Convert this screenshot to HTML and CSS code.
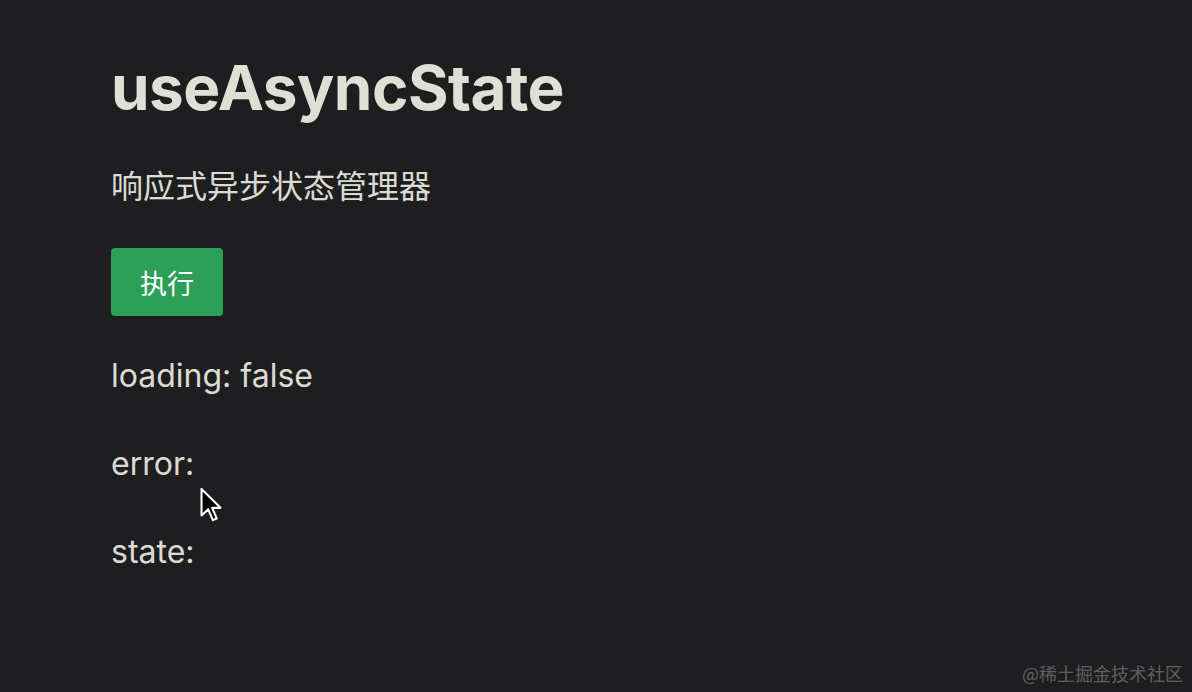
FILE: index.html
```html
<!DOCTYPE html>
<html lang="zh">
<head>
<meta charset="utf-8">
<link rel="stylesheet" href="styles.css">
</head>
<body>
<main class="page">
  <h1 class="title">useAsyncState</h1>
  <p class="subtitle">响应式异步状态管理器</p>
  <button class="run-btn">执行</button>
  <p class="line">loading: false</p>
  <p class="line">error: </p>
  <p class="line">state: </p>
</main>
<svg class="cursor" width="24" height="36" viewBox="0 0 12 19">
  <path d="M1 1 L1 15 L4.5 11.8 L7 17.5 L9 16.6 L6.6 11 L11 11 Z" fill="#000" stroke="#fff" stroke-width="1.1" stroke-linejoin="round"/>
</svg>
<div class="watermark">@稀土掘金技术社区</div>
</body>
</html>
```
FILE: styles.css
```css
html, body {
  margin: 0;
  height: 100%;
  background: #1e1e20;
}
body {
  font-family: Inter, "Noto Sans CJK SC", sans-serif;
  color: rgba(255, 255, 245, 0.86);
  overflow: hidden;
  position: relative;
}
.page {
  padding: 40px 0 0 111px;
  display: flex;
  flex-direction: column;
  align-items: flex-start;
}
.title {
  margin: 0;
  font-size: 62px;
  font-weight: 700;
  letter-spacing: -0.5px;
  line-height: 96px;
}
.subtitle {
  margin: 31px 0 0;
  font-size: 32px;
  line-height: 40px;
}
.run-btn {
  margin-top: 41px;
  background: #2c9f58;
  color: #fff;
  border: none;
  border-radius: 4px;
  width: 112px;
  height: 68px;
  font-family: Inter, "Noto Sans CJK SC", sans-serif;
  font-size: 27px;
  padding: 0;
}
.line {
  margin: 36px 0 0;
  font-size: 32px;
  line-height: 48px;
}
.line + .line {
  margin-top: 40px;
}
.cursor {
  position: absolute;
  left: 199px;
  top: 487px;
}
.watermark {
  position: absolute;
  right: 9px;
  bottom: 6px;
  font-size: 18px;
  color: rgba(255, 255, 255, 0.3);
  font-family: "Noto Sans CJK SC", sans-serif;
}
```
